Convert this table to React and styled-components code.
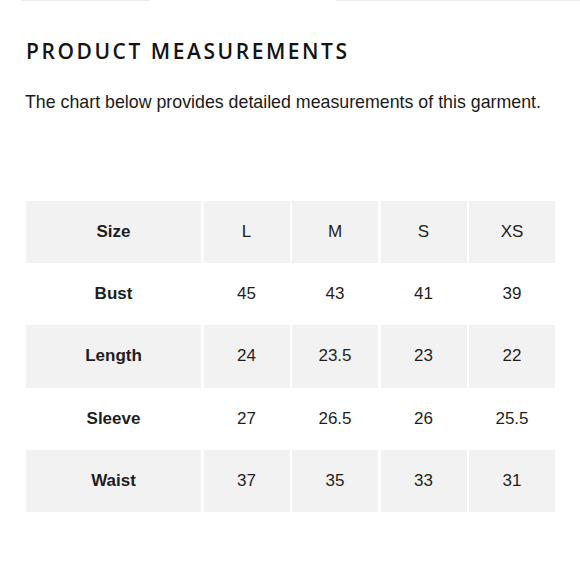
import React from 'react'
import styled, { createGlobalStyle } from 'styled-components'

const GlobalStyle = createGlobalStyle`
  html, body {
    margin: 0;
    padding: 0;
    background: #fff;
  }
  body {
    font-family: "Liberation Sans", Arial, sans-serif;
    color: #1e1e1e;
  }
`

const Page = styled.div`
  width: 580px;
  height: 580px;
  overflow: hidden;
  display: flex;
  flex-direction: column;
`

const TopRules = styled.div`
  display: flex;
  height: 1px;
`

const Rule = styled.span`
  display: block;
  margin-left: ${p => p.left}px;
  width: ${p => p.width}px;
  background: #ededed;
`

const Content = styled.div`
  padding: 0 25px 0 26px;
`

const Title = styled.h2`
  margin: 38px 0 0 0;
  font-family: "Open Sans", sans-serif;
  font-weight: 600;
  font-size: 21px;
  line-height: 24px;
  letter-spacing: 2.55px;
  color: #141414;
`

const Intro = styled.p`
  margin: 29px 0 0 -1px;
  font-size: 17.8px;
  line-height: 20px;
  color: #1a1a1a;
`

const Chart = styled.div`
  margin-top: 89px;
  display: grid;
  grid-template-columns: 175px repeat(4, 86px);
  column-gap: 2.5px;
`

const Cell = styled.div`
  height: 62.2px;
  display: flex;
  align-items: center;
  justify-content: center;
  font-size: 17px;
  font-weight: ${p => (p.label ? 700 : 400)};
  color: #1e1e1e;
  background: ${p => (p.shaded ? '#f2f2f2' : '#fff')};
`

const sizes = ['L', 'M', 'S', 'XS']

const rows = [
  { name: 'Bust', values: ['45', '43', '41', '39'] },
  { name: 'Length', values: ['24', '23.5', '23', '22'] },
  { name: 'Sleeve', values: ['27', '26.5', '26', '25.5'] },
  { name: 'Waist', values: ['37', '35', '33', '31'] },
]

export default function App() {
  const all = [{ name: 'Size', values: sizes }, ...rows]
  return (
    <Page>
      <GlobalStyle />
      <TopRules>
        <Rule left={22} width={128} />
        <Rule left={186} width={244} />
      </TopRules>
      <Content>
        <Title>PRODUCT MEASUREMENTS</Title>
        <Intro>The chart below provides detailed measurements of this garment.</Intro>
        <Chart>
          {all.map((row, i) => (
            <React.Fragment key={row.name}>
              <Cell label shaded={i % 2 === 0}>{row.name}</Cell>
              {row.values.map((v, j) => (
                <Cell key={j} shaded={i % 2 === 0}>{v}</Cell>
              ))}
            </React.Fragment>
          ))}
        </Chart>
      </Content>
    </Page>
  )
}
